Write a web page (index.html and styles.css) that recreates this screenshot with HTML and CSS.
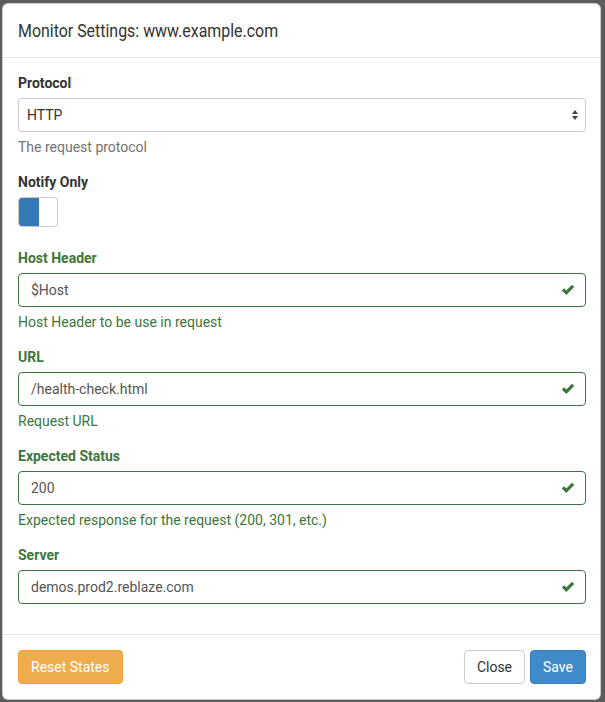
FILE: index.html
```html
<!DOCTYPE html>
<html>
<head>
<meta charset="utf-8">
<link rel="stylesheet" href="styles.css">
</head>
<body>
<div class="modal">
  <div class="modal-header">
    <h4 class="modal-title">Monitor Settings: www.example.com</h4>
  </div>
  <div class="modal-body">
    <div class="form-group">
      <label class="label">Protocol</label>
      <div class="select">
        <span>HTTP</span>
        <svg class="arrows" width="8" height="12" viewBox="0 0 8 12"><path d="M4 1 L7 5 L1 5 Z M4 11 L7 7 L1 7 Z" fill="#444"/></svg>
      </div>
      <div class="help">The request protocol</div>
    </div>
    <div class="form-group toggle-group">
      <label class="label">Notify Only</label>
      <div class="toggle"><span class="toggle-on"></span></div>
    </div>
    <div class="form-group success">
      <label class="label">Host Header</label>
      <div class="input"><span>$Host</span><svg class="ok" width="14" height="12" viewBox="0 0 14 12"><path d="M0.8 6.4 L3 4.2 L5.3 6.5 L11 0.8 L13.2 3 L5.3 10.9 Z" fill="#3c763d"/></svg></div>
      <div class="help">Host Header to be use in request</div>
    </div>
    <div class="form-group success">
      <label class="label">URL</label>
      <div class="input"><span>/health-check.html</span><svg class="ok" width="14" height="12" viewBox="0 0 14 12"><path d="M0.8 6.4 L3 4.2 L5.3 6.5 L11 0.8 L13.2 3 L5.3 10.9 Z" fill="#3c763d"/></svg></div>
      <div class="help">Request URL</div>
    </div>
    <div class="form-group success">
      <label class="label">Expected Status</label>
      <div class="input"><span>200</span><svg class="ok" width="14" height="12" viewBox="0 0 14 12"><path d="M0.8 6.4 L3 4.2 L5.3 6.5 L11 0.8 L13.2 3 L5.3 10.9 Z" fill="#3c763d"/></svg></div>
      <div class="help">Expected response for the request (200, 301, etc.)</div>
    </div>
    <div class="form-group success">
      <label class="label">Server</label>
      <div class="input"><span>demos.prod2.reblaze.com</span><svg class="ok" width="14" height="12" viewBox="0 0 14 12"><path d="M0.8 6.4 L3 4.2 L5.3 6.5 L11 0.8 L13.2 3 L5.3 10.9 Z" fill="#3c763d"/></svg></div>
    </div>
  </div>
  <div class="modal-footer">
    <button class="btn btn-warning">Reset States</button>
    <div class="right">
      <button class="btn btn-default">Close</button>
      <button class="btn btn-primary">Save</button>
    </div>
  </div>
</div>
</body>
</html>
```
FILE: styles.css
```css
html, body {
  margin: 0;
  padding: 0;
}
body {
  background: #5c5c5c;
  font-family: Roboto, "Liberation Sans", sans-serif;
  font-size: 14px;
  line-height: 20px;
  color: #333;
  height: 702px;
  overflow: hidden;
}
.modal {
  margin: 3px 4px 0 2px;
  background: #fff;
  border: 1px solid rgba(0,0,0,0.2);
  border-radius: 6px;
  box-sizing: border-box;
  height: 697px;
  display: flex;
  flex-direction: column;
}
.modal-header {
  padding: 15px;
  border-bottom: 1px solid #e5e5e5;
}
.modal-title {
  margin: 0;
  font-size: 18px;
  font-weight: 400;
  line-height: 23px;
  color: #333;
  transform: scaleX(0.885);
  transform-origin: left center;
  white-space: nowrap;
}
.modal-body {
  padding: 15px 14px 15px 15px;
  flex: 1;
}
.form-group {
  margin-bottom: 15px;
}
.form-group:last-child {
  margin-bottom: 0;
}
.toggle-group {
  margin-bottom: 21px;
}
.label {
  display: block;
  font-weight: 700;
  margin-bottom: 5px;
}
.select, .input {
  height: 34px;
  box-sizing: border-box;
  border: 1px solid #ccc;
  border-radius: 4px;
  display: flex;
  align-items: center;
  justify-content: space-between;
  color: #555;
}
.select {
  padding: 0 8px 0 8px;
  color: #333;
}
.input {
  padding: 0 12px 0 12px;
}
.arrows {
  margin-right: -2px;
}
.help {
  margin-top: 5px;
  color: #737373;
}
.success .label, .success .help {
  color: #3c763d;
}
.success .input {
  border-color: #3c763d;
}
.ok {
  margin-right: -2px;
}
.toggle {
  width: 40px;
  height: 30px;
  box-sizing: border-box;
  border: 1px solid #ccc;
  border-radius: 4px;
  overflow: hidden;
  display: flex;
}
.toggle-on {
  width: 20px;
  background: #337ab7;
}
.modal-footer {
  border-top: 1px solid #e5e5e5;
  padding: 15px 14px 15px 15px;
  display: flex;
  justify-content: space-between;
}
.right {
  display: flex;
  gap: 5px;
}
.btn {
  font-family: Roboto, "Liberation Sans", sans-serif;
  font-size: 14px;
  line-height: 20px;
  padding: 6px 12px;
  border-radius: 4px;
  border: 1px solid transparent;
  cursor: pointer;
}
.btn-warning {
  background: #f0ad4e;
  border-color: #eea236;
  color: #fff;
}
.btn-default {
  background: #fff;
  border-color: #ccc;
  color: #333;
}
.btn-primary {
  background: #428bca;
  border-color: #357ebd;
  color: #fff;
}
```
